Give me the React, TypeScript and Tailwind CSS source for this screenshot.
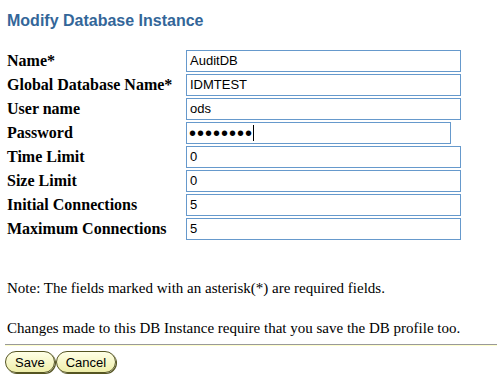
import React from 'react';

interface Field {
  label: string;
  value: string;
  type?: string;
}

const fields: Field[] = [
  { label: 'Name*', value: 'AuditDB' },
  { label: 'Global Database Name*', value: 'IDMTEST' },
  { label: 'User name', value: 'ods' },
  { label: 'Password', value: '••••••••', type: 'password' },
  { label: 'Time Limit', value: '0' },
  { label: 'Size Limit', value: '0' },
  { label: 'Initial Connections', value: '5' },
  { label: 'Maximum Connections', value: '5' },
];

function PillButton({ children }: { children: React.ReactNode }) {
  return (
    <button className="h-[22px] px-[9px] rounded-full bg-gradient-to-b from-[#ffffe6] to-[#eeeeaa] border border-[#555522] shadow-[1px_1px_0_#555522] text-[13px] leading-none text-black font-['Liberation_Sans',Arial,sans-serif]">
      {children}
    </button>
  );
}

export default function App() {
  return (
    <div className="w-[497px] h-[379px] bg-white font-['Liberation_Serif','Times_New_Roman',serif] text-black overflow-hidden">
      <h1 className="pt-[11px] pl-[7px] text-[16px] leading-[20px] font-bold text-[#336699] font-['Liberation_Sans',Arial,sans-serif]">
        Modify Database Instance
      </h1>
      <div className="mt-[19px] pl-[7px] flex flex-col gap-[2px]">
        {fields.map((f) => (
          <div key={f.label} className="flex items-center h-[22px]">
            <span className="w-[179px] text-[16px] font-bold leading-none">{f.label}</span>
            {f.type === 'password' ? (
              <div className="h-[22px] w-[265px] border border-[#6699cc] flex items-center pl-[2px]">
                <span className="text-[20px] leading-none tracking-[1px] font-['Liberation_Sans',Arial,sans-serif]">{f.value}</span>
                <span className="w-px h-[16px] bg-black" />
              </div>
            ) : (
              <div className="h-[22px] w-[275px] border border-[#6699cc] flex items-center pl-[3px]">
                <span className="text-[13px] font-['Liberation_Sans',Arial,sans-serif]">{f.value}</span>
              </div>
            )}
          </div>
        ))}
      </div>
      <p className="mt-[39px] pl-[7px] text-[15px] leading-[18px]">
        Note: The fields marked with an asterisk(*) are required fields.
      </p>
      <p className="mt-[22px] pl-[7px] text-[15px] leading-[18px]">
        Changes made to this DB Instance require that you save the DB profile too.
      </p>
      <div className="mt-[7px] ml-[5px] border-t border-[#999999] border-b border-b-[#ffffcc]" />
      <div className="mt-[5px] pl-[5px] flex gap-[1px]">
        <PillButton>Save</PillButton>
        <PillButton>Cancel</PillButton>
      </div>
    </div>
  );
}
